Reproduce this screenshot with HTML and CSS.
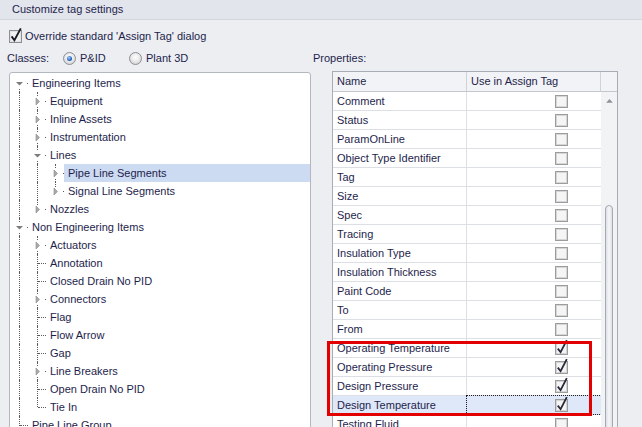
FILE: index.html
```html
<!DOCTYPE html>
<html>
<head>
<meta charset="utf-8">
<link rel="stylesheet" href="styles.css">
</head>
<body>
<div class="titlebar">Customize tag settings</div>
<div class="override">
  <svg class="cb" width="13" height="13" viewBox="0 0 13 13"><rect x="0.5" y="0.5" width="12" height="12" fill="#f1f1f1" stroke="#8d8f93"/><rect x="1.5" y="1.5" width="10" height="10" fill="none" stroke="#e2e2e2"/><path d="M2.6 6.4 L5.4 10.2 L11.8 -1.6" fill="none" stroke="#1a1a24" stroke-width="1.9"/></svg>
  <span>Override standard 'Assign Tag' dialog</span>
</div>
<div class="panes">
  <div class="left">
    <div class="classes">
      <span class="cap">Classes:</span>
      <label class="opt"><span class="radio on"></span>P&amp;ID</label>
      <label class="opt"><span class="radio"></span>Plant 3D</label>
    </div>
    <div class="tree">
      <div class="tr"><span class="ind first"><svg class="exp" width="15" height="9" viewBox="0 0 15 9"><rect width="15" height="9" fill="#fff"/><path d="M4 3 L11 3 L7.5 6.5 Z" fill="#7c7c7c"/></svg></span><span class="lbl">Engineering Items</span></div>
      <div class="tr"><span class="ind v"></span><span class="ind tee"><svg class="exp" width="15" height="9" viewBox="0 0 15 9"><rect width="15" height="9" fill="#fff"/><path d="M6 1 L9.5 4.5 L6 8 Z" fill="#a9a9a9" stroke="#8a8a8a" stroke-width="0.6"/></svg></span><span class="lbl">Equipment</span></div>
      <div class="tr"><span class="ind v"></span><span class="ind tee"><svg class="exp" width="15" height="9" viewBox="0 0 15 9"><rect width="15" height="9" fill="#fff"/><path d="M6 1 L9.5 4.5 L6 8 Z" fill="#a9a9a9" stroke="#8a8a8a" stroke-width="0.6"/></svg></span><span class="lbl">Inline Assets</span></div>
      <div class="tr"><span class="ind v"></span><span class="ind tee"><svg class="exp" width="15" height="9" viewBox="0 0 15 9"><rect width="15" height="9" fill="#fff"/><path d="M6 1 L9.5 4.5 L6 8 Z" fill="#a9a9a9" stroke="#8a8a8a" stroke-width="0.6"/></svg></span><span class="lbl">Instrumentation</span></div>
      <div class="tr"><span class="ind v"></span><span class="ind tee"><svg class="exp" width="15" height="9" viewBox="0 0 15 9"><rect width="15" height="9" fill="#fff"/><path d="M4 3 L11 3 L7.5 6.5 Z" fill="#7c7c7c"/></svg></span><span class="lbl">Lines</span></div>
      <div class="tr"><span class="ind v"></span><span class="ind v"></span><span class="ind tee"><svg class="exp" width="15" height="9" viewBox="0 0 15 9"><rect width="15" height="9" fill="#fff"/><path d="M6 1 L9.5 4.5 L6 8 Z" fill="#a9a9a9" stroke="#8a8a8a" stroke-width="0.6"/></svg></span><span class="lbl sel">Pipe Line Segments</span></div>
      <div class="tr"><span class="ind v"></span><span class="ind v"></span><span class="ind elbow"><svg class="exp" width="15" height="9" viewBox="0 0 15 9"><rect width="15" height="9" fill="#fff"/><path d="M6 1 L9.5 4.5 L6 8 Z" fill="#a9a9a9" stroke="#8a8a8a" stroke-width="0.6"/></svg></span><span class="lbl">Signal Line Segments</span></div>
      <div class="tr"><span class="ind v"></span><span class="ind elbow"><svg class="exp" width="15" height="9" viewBox="0 0 15 9"><rect width="15" height="9" fill="#fff"/><path d="M6 1 L9.5 4.5 L6 8 Z" fill="#a9a9a9" stroke="#8a8a8a" stroke-width="0.6"/></svg></span><span class="lbl">Nozzles</span></div>
      <div class="tr"><span class="ind tee"><svg class="exp" width="15" height="9" viewBox="0 0 15 9"><rect width="15" height="9" fill="#fff"/><path d="M4 3 L11 3 L7.5 6.5 Z" fill="#7c7c7c"/></svg></span><span class="lbl">Non Engineering Items</span></div>
      <div class="tr"><span class="ind v"></span><span class="ind tee"><svg class="exp" width="15" height="9" viewBox="0 0 15 9"><rect width="15" height="9" fill="#fff"/><path d="M6 1 L9.5 4.5 L6 8 Z" fill="#a9a9a9" stroke="#8a8a8a" stroke-width="0.6"/></svg></span><span class="lbl">Actuators</span></div>
      <div class="tr"><span class="ind v"></span><span class="ind tee"></span><span class="lbl">Annotation</span></div>
      <div class="tr"><span class="ind v"></span><span class="ind tee"></span><span class="lbl">Closed Drain No PID</span></div>
      <div class="tr"><span class="ind v"></span><span class="ind tee"><svg class="exp" width="15" height="9" viewBox="0 0 15 9"><rect width="15" height="9" fill="#fff"/><path d="M6 1 L9.5 4.5 L6 8 Z" fill="#a9a9a9" stroke="#8a8a8a" stroke-width="0.6"/></svg></span><span class="lbl">Connectors</span></div>
      <div class="tr"><span class="ind v"></span><span class="ind tee"></span><span class="lbl">Flag</span></div>
      <div class="tr"><span class="ind v"></span><span class="ind tee"></span><span class="lbl">Flow Arrow</span></div>
      <div class="tr"><span class="ind v"></span><span class="ind tee"></span><span class="lbl">Gap</span></div>
      <div class="tr"><span class="ind v"></span><span class="ind tee"><svg class="exp" width="15" height="9" viewBox="0 0 15 9"><rect width="15" height="9" fill="#fff"/><path d="M6 1 L9.5 4.5 L6 8 Z" fill="#a9a9a9" stroke="#8a8a8a" stroke-width="0.6"/></svg></span><span class="lbl">Line Breakers</span></div>
      <div class="tr"><span class="ind v"></span><span class="ind tee"></span><span class="lbl">Open Drain No PID</span></div>
      <div class="tr"><span class="ind v"></span><span class="ind elbow"></span><span class="lbl">Tie In</span></div>
      <div class="tr"><span class="ind tee"></span><span class="lbl">Pipe Line Group</span></div>
    </div>
  </div>
  <div class="right">
    <div class="props-cap">Properties:</div>
    <div class="gridbox">
      <div class="gh">
        <div class="h n">Name</div>
        <div class="h u">Use in Assign Tag</div>
        <div class="h corner"></div>
      </div>
      <div class="gb">
        <div class="rows">
          <div class="r"><div class="c1">Comment</div><div class="c2"><span class="gcb"></span></div></div>
          <div class="r"><div class="c1">Status</div><div class="c2"><span class="gcb"></span></div></div>
          <div class="r"><div class="c1">ParamOnLine</div><div class="c2"><span class="gcb"></span></div></div>
          <div class="r"><div class="c1">Object Type Identifier</div><div class="c2"><span class="gcb"></span></div></div>
          <div class="r"><div class="c1">Tag</div><div class="c2"><span class="gcb"></span></div></div>
          <div class="r"><div class="c1">Size</div><div class="c2"><span class="gcb"></span></div></div>
          <div class="r"><div class="c1">Spec</div><div class="c2"><span class="gcb"></span></div></div>
          <div class="r"><div class="c1">Tracing</div><div class="c2"><span class="gcb"></span></div></div>
          <div class="r"><div class="c1">Insulation Type</div><div class="c2"><span class="gcb"></span></div></div>
          <div class="r"><div class="c1">Insulation Thickness</div><div class="c2"><span class="gcb"></span></div></div>
          <div class="r"><div class="c1">Paint Code</div><div class="c2"><span class="gcb"></span></div></div>
          <div class="r"><div class="c1">To</div><div class="c2"><span class="gcb"></span></div></div>
          <div class="r"><div class="c1">From</div><div class="c2"><span class="gcb"></span></div></div>
          <div class="r"><div class="c1">Operating Temperature</div><div class="c2"><svg class="gck" width="13" height="13" viewBox="0 0 13 13"><rect x="0.5" y="0.5" width="12" height="12" fill="#f4f4f4" stroke="#9c9c9c"/><rect x="1.5" y="1.5" width="10" height="10" fill="none" stroke="#d4d4d4"/><path d="M2.8 6.6 L5.6 10.2 L11.8 -1.8" fill="none" stroke="#262a38" stroke-width="1.8"/></svg></div></div>
          <div class="r"><div class="c1">Operating Pressure</div><div class="c2"><svg class="gck" width="13" height="13" viewBox="0 0 13 13"><rect x="0.5" y="0.5" width="12" height="12" fill="#f4f4f4" stroke="#9c9c9c"/><rect x="1.5" y="1.5" width="10" height="10" fill="none" stroke="#d4d4d4"/><path d="M2.8 6.6 L5.6 10.2 L11.8 -1.8" fill="none" stroke="#262a38" stroke-width="1.8"/></svg></div></div>
          <div class="r"><div class="c1">Design Pressure</div><div class="c2"><svg class="gck" width="13" height="13" viewBox="0 0 13 13"><rect x="0.5" y="0.5" width="12" height="12" fill="#f4f4f4" stroke="#9c9c9c"/><rect x="1.5" y="1.5" width="10" height="10" fill="none" stroke="#d4d4d4"/><path d="M2.8 6.6 L5.6 10.2 L11.8 -1.8" fill="none" stroke="#262a38" stroke-width="1.8"/></svg></div></div>
          <div class="r sel"><div class="c1">Design Temperature</div><div class="c2 focus"><svg class="gck" width="13" height="13" viewBox="0 0 13 13"><rect x="0.5" y="0.5" width="12" height="12" fill="#f4f4f4" stroke="#9c9c9c"/><rect x="1.5" y="1.5" width="10" height="10" fill="none" stroke="#d4d4d4"/><path d="M2.8 6.6 L5.6 10.2 L11.8 -1.8" fill="none" stroke="#262a38" stroke-width="1.8"/></svg></div></div>
          <div class="r"><div class="c1">Testing Fluid</div><div class="c2"><span class="gcb"></span></div></div>
          <div class="r"><div class="c1">Testing Pressure</div><div class="c2"><span class="gcb"></span></div></div>
        </div>
        <div class="vs">
          <svg class="up" width="7" height="4" viewBox="0 0 7 4"><path d="M0 4 L3.5 0 L7 4 Z" fill="#8e9198"/></svg>
          <div class="thumb"></div>
        </div>
      </div>
      <div class="redbox"></div>
    </div>
  </div>
</div>
</body>
</html>
```

FILE: styles.css
```css
html, body {
  margin: 0;
  padding: 0;
}
body {
  width: 642px;
  height: 427px;
  overflow: hidden;
  background: #eceef2;
  font-family: "Liberation Sans", Arial, sans-serif;
  font-size: 11px;
  color: #1e1e4c;
}
.titlebar {
  height: 19px;
  line-height: 19px;
  padding-left: 12px;
  background: #e2e5eb;
  border-bottom: 1px solid #d2d6dd;
}
.override {
  display: flex;
  align-items: center;
  gap: 3px;
  height: 16px;
  margin-top: 8px;
  padding-left: 9px;
}
.cb, .gck {
  overflow: visible;
  flex: none;
}
.panes {
  display: grid;
  grid-template-columns: 304px 1fr;
  column-gap: 2px;
  padding-left: 7px;
  margin-top: 6px;
}
.classes {
  display: flex;
  align-items: center;
  height: 16px;
}
.classes .cap {
  width: 56px;
}
.opt {
  display: flex;
  align-items: center;
  gap: 4px;
  width: 66px;
}
.radio {
  width: 13px;
  height: 13px;
  box-sizing: border-box;
  border-radius: 50%;
  border: 1px solid #8c8f94;
  background: radial-gradient(circle at 50% 40%, #fdfdfd 0, #f0f0f0 3px, #d9dadc 6px);
  display: flex;
  align-items: center;
  justify-content: center;
  flex: none;
}
.radio.on::after {
  content: "";
  width: 5px;
  height: 5px;
  border-radius: 50%;
  background: radial-gradient(circle at 40% 35%, #a8cdf6 0, #3f7fd4 2px, #2458ac 3px);
}
.tree {
  margin: 6px 0 0 2px;
  width: 302px;
  height: 380px;
  box-sizing: border-box;
  border: 1px solid #b3b7bf;
  border-radius: 3px;
  background: #fff;
  padding-top: 1px;
  overflow: hidden;
}
.tr {
  display: flex;
  height: 18px;
}
.ind {
  position: relative;
  width: 18px;
  height: 18px;
  flex: none;
  display: flex;
  align-items: center;
  justify-content: center;
}
.ind.v::before,
.ind.tee::before,
.ind.elbow::before,
.ind.first::before {
  content: "";
  position: absolute;
  left: 9px;
  top: 0;
  bottom: 0;
  border-left: 1px dotted #5a5a5a;
}
.ind.elbow::before {
  bottom: 9px;
}
.ind.first::before {
  top: 9px;
}
.ind.tee::after,
.ind.elbow::after,
.ind.first::after {
  content: "";
  position: absolute;
  left: 10px;
  right: 0;
  top: 9px;
  border-top: 1px dotted #5a5a5a;
}
.exp {
  position: relative;
  z-index: 1;
  margin-left: 1px;
}
.lbl {
  flex: 1;
  padding-left: 4px;
  line-height: 18px;
  white-space: nowrap;
}
.lbl.sel {
  background: #ccdaf2;
}
.props-cap {
  height: 16px;
  line-height: 16px;
}
.gridbox {
  position: relative;
  margin: 5px 0 0 19px;
  width: 286px;
  height: 380px;
  box-sizing: border-box;
  border: 1px solid #a8acb4;
  background: #fff;
}
.gh {
  display: flex;
  height: 19px;
  background: #f2f3f6;
  border-bottom: 1px solid #c4c7cd;
}
.h {
  box-sizing: border-box;
  border-right: 1px solid #cfd2d8;
  padding-left: 4px;
  line-height: 19px;
}
.h.n, .h.u {
  width: 134px;
}
.h.corner {
  width: 16px;
  border-right: none;
}
.gb {
  display: flex;
}
.rows {
  width: 268px;
}
.r {
  display: flex;
  height: 18px;
  border-bottom: 1px solid #dcdfe4;
}
.r.sel {
  background: #dfe8f8;
}
.c1 {
  width: 134px;
  box-sizing: border-box;
  border-right: 1px solid #dcdfe4;
  padding-left: 4px;
  line-height: 18px;
  white-space: nowrap;
}
.c2 {
  width: 134px;
  box-sizing: border-box;
  padding-left: 88px;
  display: flex;
  align-items: center;
}
.c2.focus {
  outline: 1px dotted #1c1c2c;
  outline-offset: 0;
}
.gcb {
  width: 13px;
  height: 13px;
  box-sizing: border-box;
  border: 1px solid #9c9c9c;
  box-shadow: inset 0 0 0 1px #d6d6d6;
  background: #f5f5f5;
}
.vs {
  width: 16px;
  background: #f2f3f5;
  display: flex;
  flex-direction: column;
  align-items: center;
  height: 360px;
}
.up {
  margin-top: 7px;
}
.thumb {
  margin-top: 102px;
  width: 8px;
  height: 260px;
  box-sizing: border-box;
  border: 1px solid #a6a9b1;
  border-radius: 4px 4px 0 0;
  background: linear-gradient(90deg, #dfe0e5, #f5f6f8 50%, #dfe0e5);
}
.redbox {
  position: absolute;
  left: -6px;
  top: 269px;
  width: 265px;
  height: 75px;
  box-sizing: border-box;
  border: 3px solid #e30000;
  pointer-events: none;
}
```
